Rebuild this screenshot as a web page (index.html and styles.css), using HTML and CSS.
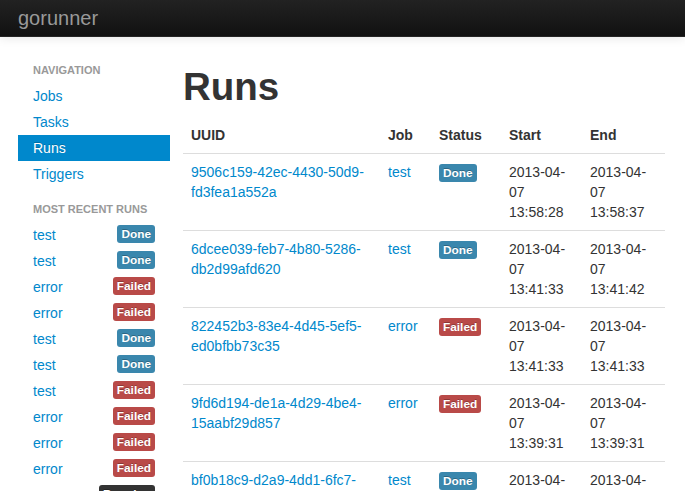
FILE: index.html
```html
<!DOCTYPE html>
<html>
<head>
<meta charset="utf-8">
<title>gorunner</title>
<link rel="stylesheet" href="styles.css">
</head>
<body>
<div class="navbar">
  <a class="brand" href="#">gorunner</a>
</div>
<div class="layout">
  <div class="sidebar">
    <ul class="nav-list">
      <li class="nav-header">Navigation</li>
      <li><a href="#">Jobs</a></li>
      <li><a href="#">Tasks</a></li>
      <li class="active"><a href="#">Runs</a></li>
      <li><a href="#">Triggers</a></li>
      <li class="nav-header spaced">Most Recent Runs</li>
      <li><a href="#">test <span class="label info">Done</span></a></li>
      <li><a href="#">test <span class="label info">Done</span></a></li>
      <li><a href="#">error <span class="label important">Failed</span></a></li>
      <li><a href="#">error <span class="label important">Failed</span></a></li>
      <li><a href="#">test <span class="label info">Done</span></a></li>
      <li><a href="#">test <span class="label info">Done</span></a></li>
      <li><a href="#">test <span class="label important">Failed</span></a></li>
      <li><a href="#">error <span class="label important">Failed</span></a></li>
      <li><a href="#">error <span class="label important">Failed</span></a></li>
      <li><a href="#">error <span class="label important">Failed</span></a></li>
      <li><a href="#">error <span class="label inverse">Running</span></a></li>
    </ul>
  </div>
  <div class="main">
    <h1>Runs</h1>
    <table class="table">
      <colgroup>
        <col class="c-uuid"><col class="c-job"><col class="c-status"><col class="c-start"><col class="c-end">
      </colgroup>
      <thead>
        <tr><th>UUID</th><th>Job</th><th>Status</th><th>Start</th><th>End</th></tr>
      </thead>
      <tbody>
        <tr>
          <td><a href="#">9506c159-42ec-4430-50d9-<wbr>fd3fea1a552a</a></td>
          <td><a href="#">test</a></td>
          <td><span class="label info">Done</span></td>
          <td>2013-04-<wbr>07 13:58:28</td>
          <td>2013-04-<wbr>07 13:58:37</td>
        </tr>
        <tr>
          <td><a href="#">6dcee039-feb7-4b80-5286-<wbr>db2d99afd620</a></td>
          <td><a href="#">test</a></td>
          <td><span class="label info">Done</span></td>
          <td>2013-04-<wbr>07 13:41:33</td>
          <td>2013-04-<wbr>07 13:41:42</td>
        </tr>
        <tr>
          <td><a href="#">822452b3-83e4-4d45-5ef5-<wbr>ed0bfbb73c35</a></td>
          <td><a href="#">error</a></td>
          <td><span class="label important">Failed</span></td>
          <td>2013-04-<wbr>07 13:41:33</td>
          <td>2013-04-<wbr>07 13:41:33</td>
        </tr>
        <tr>
          <td><a href="#">9fd6d194-de1a-4d29-4be4-<wbr>15aabf29d857</a></td>
          <td><a href="#">error</a></td>
          <td><span class="label important">Failed</span></td>
          <td>2013-04-<wbr>07 13:39:31</td>
          <td>2013-04-<wbr>07 13:39:31</td>
        </tr>
        <tr>
          <td><a href="#">bf0b18c9-d2a9-4dd1-6fc7-<wbr>2c8e0a5b7d41</a></td>
          <td><a href="#">test</a></td>
          <td><span class="label info">Done</span></td>
          <td>2013-04-<wbr>07 13:38:12</td>
          <td>2013-04-<wbr>07 13:38:20</td>
        </tr>
      </tbody>
    </table>
  </div>
</div>
</body>
</html>
```
FILE: styles.css
```css
html {
  overflow: hidden;
}
body {
  margin: 0;
  font-family: "Liberation Sans", Arial, sans-serif;
  font-size: 14px;
  line-height: 20px;
  color: #333;
  background: #fff;
}
a {
  color: #0088cc;
  text-decoration: none;
}
.navbar {
  height: 37px;
  background: linear-gradient(to bottom, #222222, #111111);
  border-bottom: 1px solid #252525;
  box-shadow: 0 1px 10px rgba(0, 0, 0, 0.1);
  box-sizing: border-box;
  display: flex;
  align-items: center;
}
.brand {
  display: block;
  padding: 0 18px;
  font-size: 20px;
  line-height: 20px;
  font-weight: 200;
  color: #999;
  margin-top: -1px;
}
.layout {
  display: flex;
  padding: 20px 20px 0 18px;
  gap: 13px;
}
.sidebar {
  width: 152px;
  flex: none;
}
.nav-list {
  list-style: none;
  margin: 0;
  padding: 0;
}
.nav-list li > a {
  display: block;
  padding: 3px 15px;
  line-height: 20px;
  color: #0088cc;
}
.nav-list li.active > a {
  background: #0088cc;
  color: #fff;
  text-shadow: 0 -1px 0 rgba(0, 0, 0, 0.2);
}
.nav-header {
  padding: 3px 15px;
  font-size: 11px;
  font-weight: bold;
  line-height: 20px;
  color: #999;
  text-transform: uppercase;
  text-shadow: 0 1px 0 rgba(255, 255, 255, 0.5);
}
.nav-header.spaced {
  margin-top: 9px;
}
.nav-list .label {
  float: right;
}
.label {
  display: inline-block;
  padding: 2px 4px;
  font-size: 11.844px;
  font-weight: bold;
  line-height: 14px;
  color: #fff;
  text-shadow: 0 -1px 0 rgba(0, 0, 0, 0.25);
  white-space: nowrap;
  vertical-align: baseline;
  border-radius: 3px;
}
.label.info {
  background: #3a87ad;
}
.label.important {
  background: #b94a48;
}
.label.inverse {
  background: #333333;
}
.main {
  width: 482px;
  flex: none;
}
h1 {
  margin: 10px 0;
  font-size: 38.5px;
  line-height: 40px;
  font-weight: bold;
  color: #333;
}
.table {
  width: 100%;
  table-layout: fixed;
  border-collapse: collapse;
  border-spacing: 0;
  margin-bottom: 20px;
}
.c-uuid { width: 197px; }
.c-job { width: 51px; }
.c-status { width: 70px; }
.c-start { width: 81px; }
.c-end { width: 83px; }
.table th,
.table td {
  padding: 8px;
  line-height: 20px;
  text-align: left;
  vertical-align: top;
  border-top: 1px solid #ddd;
}
.table thead th {
  border-top: 0;
  font-weight: bold;
  vertical-align: bottom;
}
```
